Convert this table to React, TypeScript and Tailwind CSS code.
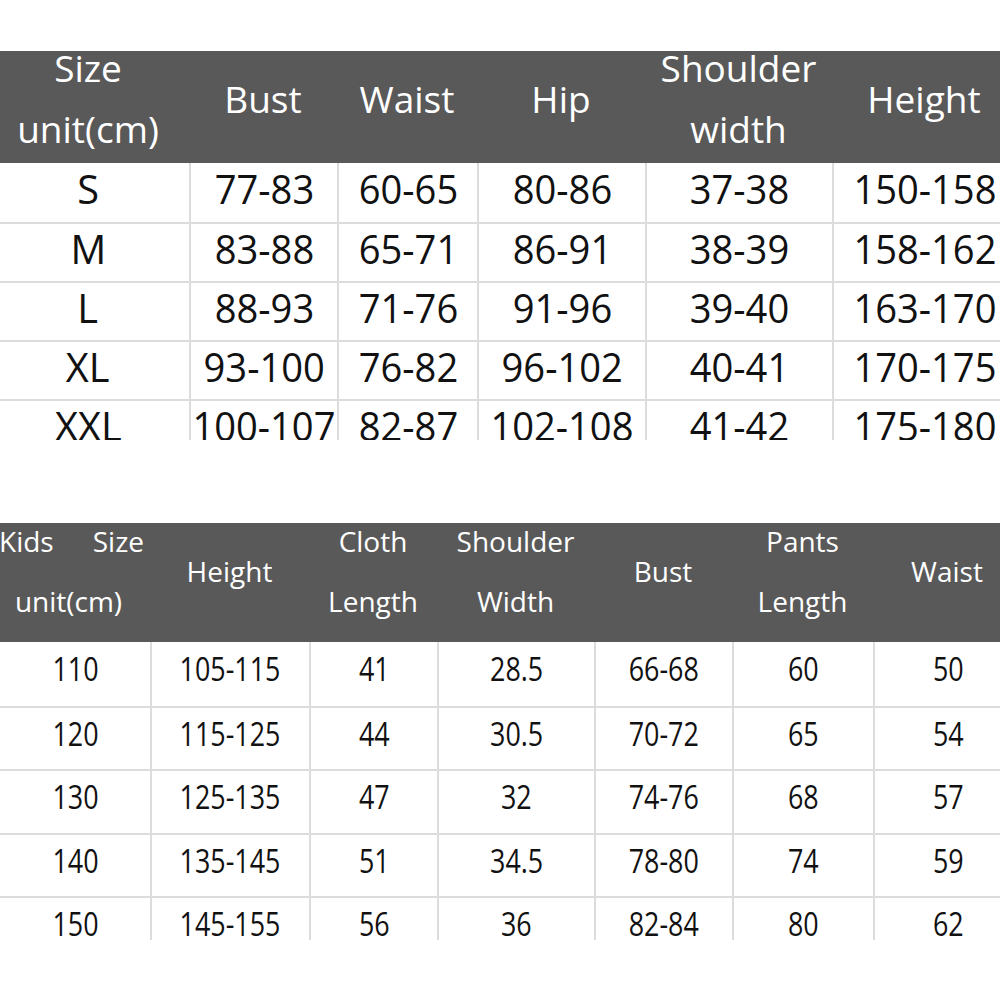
import React from "react";

const topRows = [
  ["S", "77-83", "60-65", "80-86", "37-38", "150-158"],
  ["M", "83-88", "65-71", "86-91", "38-39", "158-162"],
  ["L", "88-93", "71-76", "91-96", "39-40", "163-170"],
  ["XL", "93-100", "76-82", "96-102", "40-41", "170-175"],
  ["XXL", "100-107", "82-87", "102-108", "41-42", "175-180"],
];

const kidRows = [
  ["110", "105-115", "41", "28.5", "66-68", "60", "50"],
  ["120", "115-125", "44", "30.5", "70-72", "65", "54"],
  ["130", "125-135", "47", "32", "74-76", "68", "57"],
  ["140", "135-145", "51", "34.5", "78-80", "74", "59"],
  ["150", "145-155", "56", "36", "82-84", "80", "62"],
];

function TopHeadCell({ lines, first }: { lines: string[]; first?: boolean }) {
  return (
    <div
      className={
        "min-h-0 flex flex-col items-center justify-center pb-[18px] text-[37px] leading-[61px] text-white whitespace-nowrap " +
        (first ? "pr-[13px]" : "")
      }
    >
      {lines.map((l, i) => (
        <div key={i}>{l}</div>
      ))}
    </div>
  );
}

function KidHeadCell({ lines }: { lines: string[] }) {
  return (
    <div className="min-h-0 flex flex-col items-center justify-center pb-[23px] text-[28px] leading-[60px] text-white whitespace-nowrap">
      {lines.map((l, i) => (
        <div key={i}>{l}</div>
      ))}
    </div>
  );
}

export default function App() {
  return (
    <div
      className="w-[1000px] h-[1000px] overflow-hidden bg-white"
      style={{ fontFamily: '"Open Sans", "Noto Sans", sans-serif' }}
    >
      {/* Adult table */}
      <div className="pt-[51px]">
        <div className="h-[389px] overflow-hidden">
          <div className="w-[1016px]">
            <div className="grid grid-cols-[189px_148px_140px_168px_187px_184px] grid-rows-[112px] h-[112px] bg-[#595959]">
              <TopHeadCell lines={["Size", "unit(cm)"]} first />
              <TopHeadCell lines={["Bust"]} />
              <TopHeadCell lines={["Waist"]} />
              <TopHeadCell lines={["Hip"]} />
              <TopHeadCell lines={["Shoulder", "width"]} />
              <TopHeadCell lines={["Height"]} />
            </div>
            {topRows.map((row, ri) => (
              <div
                key={ri}
                className={
                  "grid grid-cols-[189px_148px_140px_168px_187px_184px] h-[59px] " +
                  (ri > 0 ? "border-t-2 border-[#dcdcdc]" : "")
                }
              >
                {row.map((c, ci) => (
                  <div
                    key={ci}
                    className={
                      "flex items-center justify-center pb-[8px] text-[41px] leading-[41px] text-[#111] whitespace-nowrap " +
                      (ci > 0 ? "border-l-2 border-[#dcdcdc]" : "pr-[13px]")
                    }
                  >
                    <span className={"inline-block " + (ci === 0 ? "scale-x-[0.97]" : "scale-x-[0.93]")}>{c}</span>
                  </div>
                ))}
              </div>
            ))}
          </div>
        </div>
      </div>

      {/* Kids table */}
      <div className="pt-[83px]">
        <div className="h-[417px] overflow-hidden">
          <div className="w-[1021px]">
            <div className="grid grid-cols-[150px_159px_128px_157px_138px_141px_148px] grid-rows-[119px] h-[119px] bg-[#595959]">
              <div className="min-h-0 flex flex-col justify-center pb-[23px] text-[28px] leading-[60px] text-white whitespace-nowrap">
                <div className="ml-[-1px] w-[145px] flex justify-between">
                  <span>Kids</span>
                  <span>Size</span>
                </div>
                <div className="ml-[-7px] w-[151px] text-center">unit(cm)</div>
              </div>
              <KidHeadCell lines={["Height"]} />
              <KidHeadCell lines={["Cloth", "Length"]} />
              <KidHeadCell lines={["Shoulder", "Width"]} />
              <KidHeadCell lines={["Bust"]} />
              <KidHeadCell lines={["Pants", "Length"]} />
              <KidHeadCell lines={["Waist"]} />
            </div>
            {kidRows.map((row, ri) => (
              <div
                key={ri}
                className={
                  "grid grid-cols-[150px_159px_128px_157px_138px_141px_148px] h-[63.5px] " +
                  (ri > 0 ? "border-t-2 border-[#dcdcdc]" : "")
                }
              >
                {row.map((c, ci) => (
                  <div
                    key={ci}
                    className={
                      "flex items-center justify-center pb-[9px] text-[32px] leading-[32px] text-[#111] whitespace-nowrap " +
                      (ci > 0 ? "border-l-2 border-[#dcdcdc]" : "")
                    }
                  >
                    <span className="inline-block scale-x-[0.84]">{c}</span>
                  </div>
                ))}
              </div>
            ))}
          </div>
        </div>
      </div>
    </div>
  );
}
